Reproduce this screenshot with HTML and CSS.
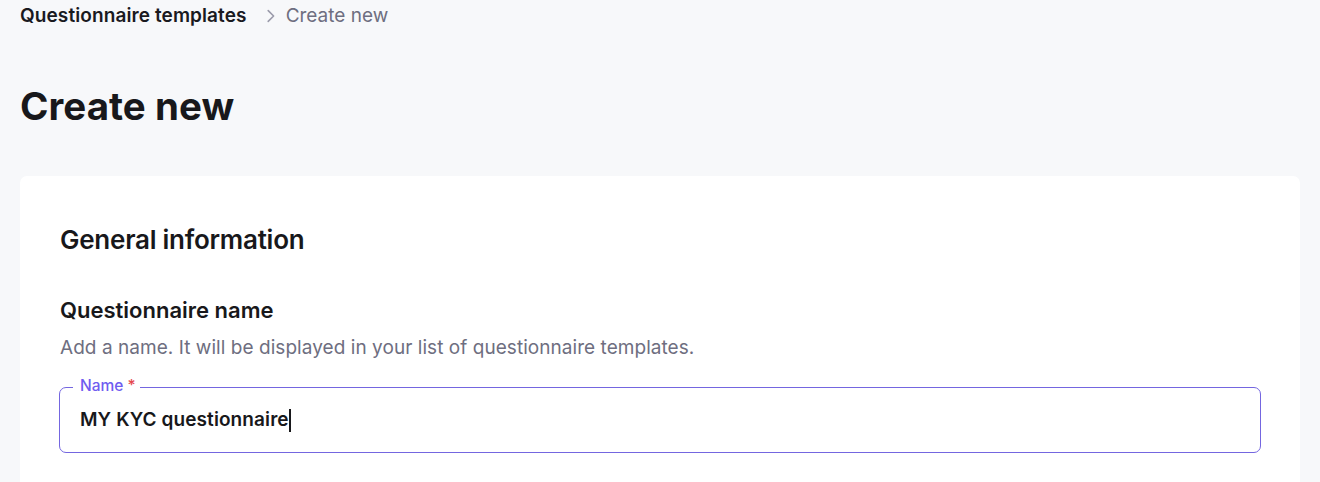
FILE: index.html
```html
<!DOCTYPE html>
<html lang="en">
<head>
<meta charset="utf-8">
<title>Create new</title>
<link rel="stylesheet" href="styles.css">
</head>
<body>
<div class="page">
  <nav class="breadcrumb">
    <span class="crumb-link">Questionnaire templates</span>
    <svg class="crumb-sep" width="12" height="16" viewBox="0 0 12 16"><path d="M3.2 2.6L8.6 8l-5.4 5.4" fill="none" stroke="#9b9bab" stroke-width="1.6" stroke-linecap="round" stroke-linejoin="round"/></svg>
    <span class="crumb-current">Create new</span>
  </nav>
  <h1 class="title">Create new</h1>
  <section class="card">
    <h2 class="section-title">General information</h2>
    <h3 class="field-title">Questionnaire name</h3>
    <p class="field-desc">Add a name. It will be displayed in your list of questionnaire templates.</p>
    <div class="input-box">
      <span class="input-label">Name <span class="req">*</span></span>
      <div class="input-value">MY KYC questionnaire<span class="caret"></span></div>
    </div>
  </section>
</div>
</body>
</html>
```

FILE: styles.css
```css
html, body {
  margin: 0;
  padding: 0;
  background: #f7f8fa;
  font-family: Inter, "Noto Sans", sans-serif;
  color: #18181b;
}
.page {
  padding: 0 20px;
  height: 482px;
  overflow: hidden;
}
.breadcrumb {
  display: flex;
  align-items: center;
  height: 28px;
  padding-top: 2px;
  font-size: 19px;
  line-height: 28px;
}
.crumb-link {
  font-weight: 600;
  color: #1a1a1f;
  letter-spacing: 0.1px;
}
.crumb-sep {
  margin: 0 9px 0 18px;
}
.crumb-current {
  color: #6e6e80;
}
.title {
  margin: 57px 0 0 0;
  font-size: 38.5px;
  font-weight: 700;
  line-height: 38px;
  letter-spacing: 0.05px;
}
.card {
  margin-top: 51px;
  background: #ffffff;
  border-radius: 7px;
  padding: 49px 39px 40px 40px;
}
.section-title {
  margin: 0;
  font-size: 26px;
  font-weight: 600;
  line-height: 30px;
  letter-spacing: -0.25px;
}
.field-title {
  margin: 42px 0 0 0;
  font-size: 22px;
  font-weight: 600;
  line-height: 26px;
}
.field-desc {
  margin: 13px 0 0 0;
  font-size: 19px;
  line-height: 24px;
  letter-spacing: 0.05px;
  color: #6e6e80;
}
.input-box {
  position: relative;
  margin: 27px 0 0 -1px;
  border: 1px solid #7466e0;
  border-radius: 7px;
  height: 64px;
  padding: 0 20px;
  display: flex;
  align-items: center;
}
.input-label {
  position: absolute;
  top: -11px;
  left: 13px;
  padding: 0 4px 0 7px;
  background: #ffffff;
  font-size: 15.5px;
  font-weight: 500;
  line-height: 18px;
  color: #6f5cf0;
}
.req {
  color: #e5484d;
}
.input-value {
  font-size: 19px;
  font-weight: 600;
  line-height: 24px;
  letter-spacing: 0.1px;
  display: flex;
  align-items: center;
}
.caret {
  display: inline-block;
  width: 2px;
  height: 23px;
  background: #18181b;
}
```
